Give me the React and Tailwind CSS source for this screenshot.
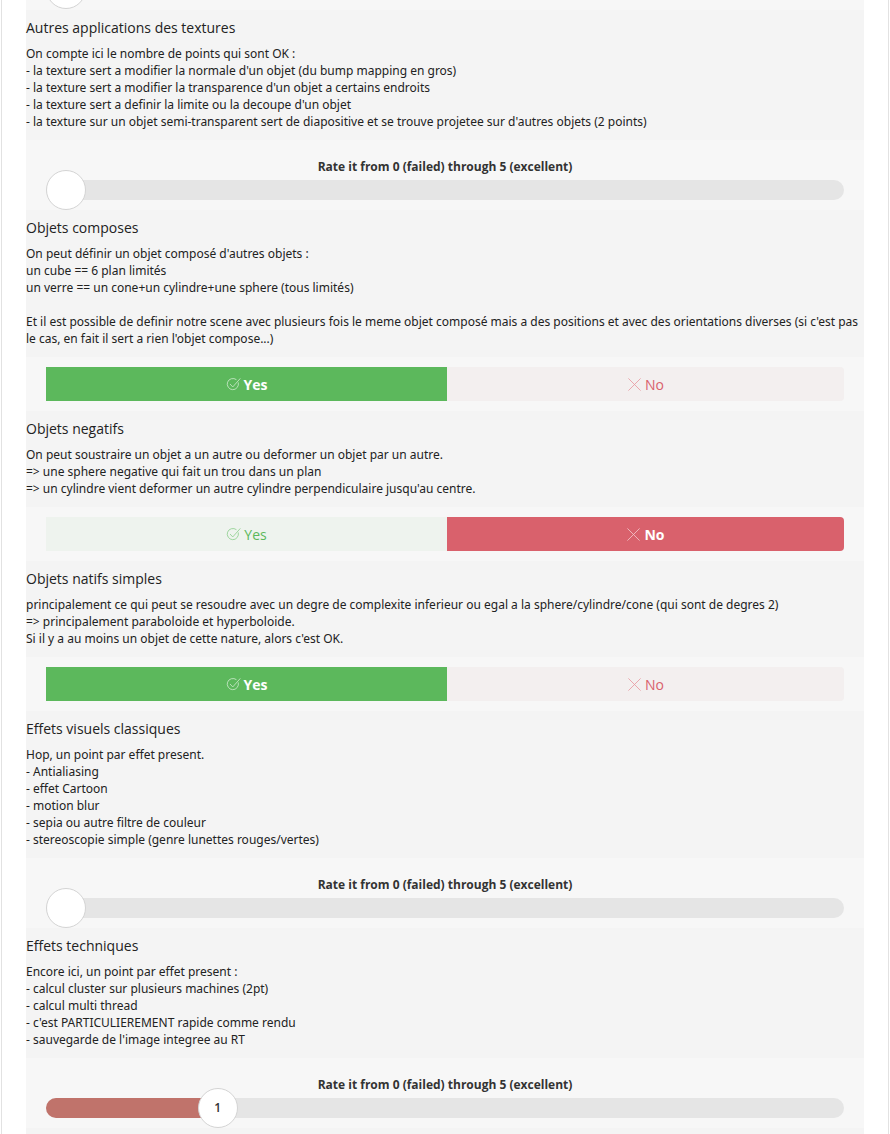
const criteria = [
  {
    title: 'Autres applications des textures',
    lines: [
      'On compte ici le nombre de points qui sont OK :',
      '- la texture sert a modifier la normale d\'un objet (du bump mapping en gros)',
      '- la texture sert a modifier la transparence d\'un objet a certains endroits',
      '- la texture sert a definir la limite ou la decoupe d\'un objet',
      '- la texture sur un objet semi-transparent sert de diapositive et se trouve projetee sur d\'autres objets (2 points)',
    ],
    kind: 'rate',
    value: 0,
  },
  {
    title: 'Objets composes',
    lines: [
      'On peut définir un objet composé d\'autres objets :',
      'un cube == 6 plan limités',
      'un verre == un cone+un cylindre+une sphere (tous limités)',
      '',
      'Et il est possible de definir notre scene avec plusieurs fois le meme objet composé mais a des positions et avec des orientations diverses (si c\'est pas le cas, en fait il sert a rien l\'objet compose...)',
    ],
    kind: 'bool',
    value: true,
  },
  {
    title: 'Objets negatifs',
    lines: [
      'On peut soustraire un objet a un autre ou deformer un objet par un autre.',
      '=> une sphere negative qui fait un trou dans un plan',
      '=> un cylindre vient deformer un autre cylindre perpendiculaire jusqu\'au centre.',
    ],
    kind: 'bool',
    value: false,
  },
  {
    title: 'Objets natifs simples',
    lines: [
      'principalement ce qui peut se resoudre avec un degre de complexite inferieur ou egal a la sphere/cylindre/cone (qui sont de degres 2)',
      '=> principalement paraboloide et hyperboloide.',
      'Si il y a au moins un objet de cette nature, alors c\'est OK.',
    ],
    kind: 'bool',
    value: true,
  },
  {
    title: 'Effets visuels classiques',
    lines: [
      'Hop, un point par effet present.',
      '- Antialiasing',
      '- effet Cartoon',
      '- motion blur',
      '- sepia ou autre filtre de couleur',
      '- stereoscopie simple (genre lunettes rouges/vertes)',
    ],
    kind: 'rate',
    value: 0,
  },
  {
    title: 'Effets techniques',
    lines: [
      'Encore ici, un point par effet present :',
      '- calcul cluster sur plusieurs machines (2pt)',
      '- calcul multi thread',
      '- c\'est PARTICULIEREMENT rapide comme rendu',
      '- sauvegarde de l\'image integree au RT',
    ],
    kind: 'rate',
    value: 1,
  },
]

function CheckIcon({ className }) {
  return (
    <svg className={className} viewBox="0 0 16 16" fill="none" stroke="currentColor" strokeWidth="0.9">
      <path d="M13.2 6.2A6 6 0 1 1 10.8 2.6" strokeLinecap="round" />
      <path d="M4.6 7.8l2.6 2.8L15 1.8" strokeLinecap="round" strokeLinejoin="round" />
    </svg>
  )
}

function CrossIcon({ className }) {
  return (
    <svg className={className} viewBox="0 0 16 16" fill="none" stroke="currentColor" strokeWidth="0.9">
      <path d="M1.5 1.5l13 13M14.5 1.5l-13 13" />
    </svg>
  )
}

function Description({ title, lines }) {
  return (
    <div className="bg-[#f4f4f4] pt-[7px] pb-[10px]">
      <h3 className="text-[14px] leading-[21px] text-[#222] mb-[7px]">{title}</h3>
      <div className="font-['Noto_Sans',sans-serif] text-[12px] leading-[17px] text-[#222]">
        {lines.map((l, i) => (
          <div key={i} className="min-h-[17px]">{l}</div>
        ))}
      </div>
    </div>
  )
}

function Rating({ value }) {
  const pos = 20 + (value / 5) * 758
  return (
    <div className="bg-[#f7f7f7] px-[20px] pt-[18px] pb-[10px]">
      <div className="text-center text-[12px] leading-[17px] font-bold text-[#333]">
        Rate it from 0 (failed) through 5 (excellent)
      </div>
      <div className="relative mt-[5px] h-[20px] rounded-full bg-[#e5e5e5]">
        {value > 0 && (
          <div className="absolute left-0 top-0 h-full rounded-l-full bg-[#c0736b]" style={{ width: pos }} />
        )}
        <div
          className="absolute top-[-10px] w-[40px] h-[40px] -ml-[20px] rounded-full bg-white border border-[#d4d4d4] flex items-center justify-center text-[12px] font-semibold text-[#333]"
          style={{ left: pos }}
        >
          {value > 0 ? value : ''}
        </div>
      </div>
    </div>
  )
}

function YesNo({ value }) {
  return (
    <div className="bg-[#f7f7f7] px-[20px] py-[10px]">
      <div className="flex h-[34px] text-[14px]">
        <div
          className={`w-[401px] flex items-center justify-center gap-[3px] ${
            value ? 'bg-[#5cb85c] text-white font-bold' : 'bg-[#eef3ee] text-[#5cb85c]'
          }`}
        >
          <CheckIcon className={`w-[15px] h-[15px] ${value ? 'text-[#c9e9c9]' : 'text-[#8fd08f]'}`} />
          Yes
        </div>
        <div
          className={`flex-1 flex items-center justify-center gap-[3px] rounded-r-[4px] ${
            !value ? 'bg-[#d9616c] text-white font-bold' : 'bg-[#f3efef] text-[#d9616c]'
          }`}
        >
          <CrossIcon className={`w-[15px] h-[15px] ${!value ? 'text-[#f3c4c8]' : 'text-[#e99aa1]'}`} />
          No
        </div>
      </div>
    </div>
  )
}

export default function App() {
  return (
    <div className="mx-[1px] min-h-[1134px] border-x border-[#e2e2e2] bg-white px-[24px] overflow-hidden" style={{ fontFamily: '"Open Sans", "Noto Sans", sans-serif' }}>
      <div className="relative h-[10px] overflow-hidden bg-[#f7f7f7]">
        <div className="absolute left-[20px] top-[-31px] w-[40px] h-[40px] rounded-full bg-white border border-[#d4d4d4]" />
      </div>
      {criteria.map((c) => (
        <div key={c.title}>
          <Description title={c.title} lines={c.lines} />
          {c.kind === 'rate' ? <Rating value={c.value} /> : <YesNo value={c.value} />}
        </div>
      ))}
      <div className="h-[20px] bg-[#f4f4f4]" />
    </div>
  )
}
